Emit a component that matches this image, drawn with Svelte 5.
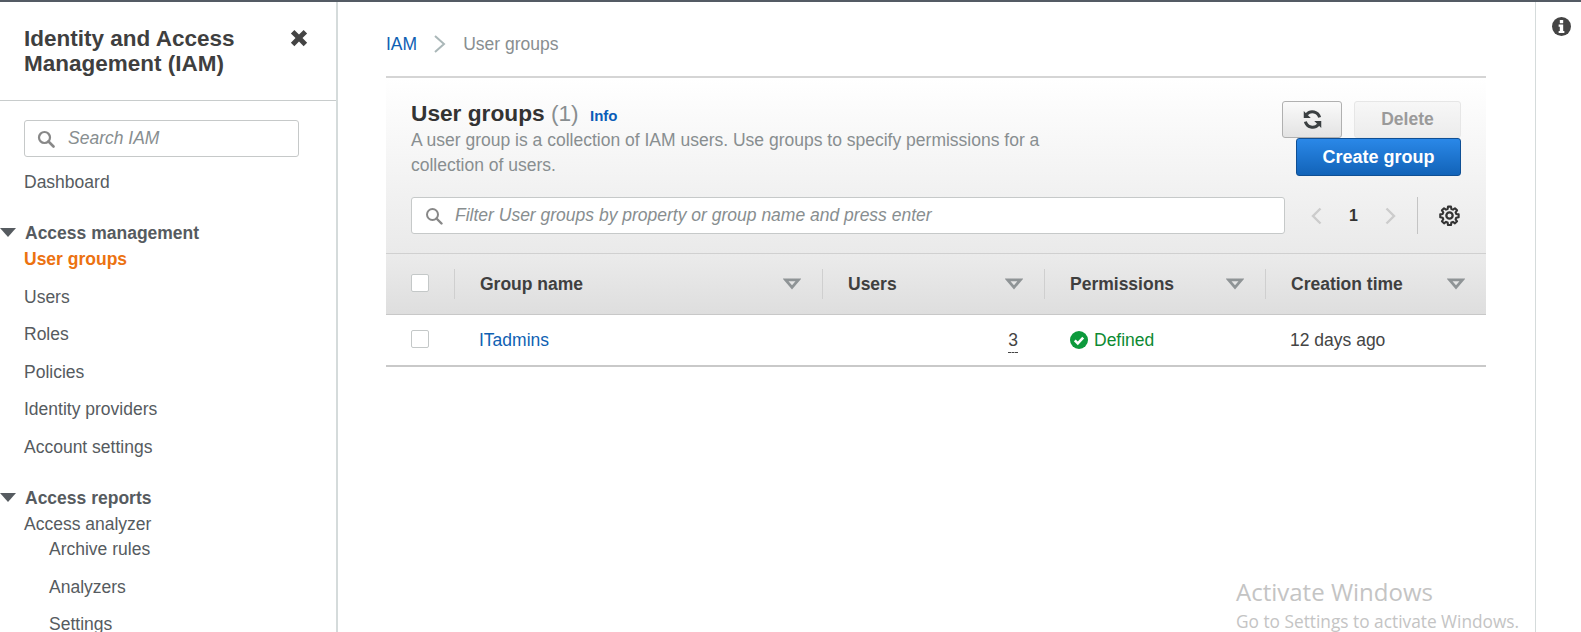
<script>
  const nav = ["Users", "Roles", "Policies", "Identity providers", "Account settings"];
  const subNav = ["Archive rules", "Analyzers", "Settings"];
  const columns = ["Group name", "Users", "Permissions", "Creation time"];
</script>

<div class="page">
  <aside class="sidebar">
    <header class="side-head">
      <h2>Identity and Access Management (IAM)</h2>
      <svg class="close" viewBox="0 0 16 16" width="20" height="20">
        <path d="M1.500 4.300 4.300 1.500 8 5.200l3.700-3.700 2.800 2.800L10.800 8l3.700 3.700-2.800 2.800L8 10.800l-3.700 3.700-2.800-2.800L5.200 8z" fill="#444" />
      </svg>
    </header>
    <div class="side-body">
      <div class="field side-search">
        <svg class="mag" viewBox="0 0 18 18" width="18" height="18">
          <circle cx="7.500" cy="7.500" r="5.500" fill="none" stroke="#888" stroke-width="2.200" />
          <path d="m11.500 11.500 5 5" stroke="#888" stroke-width="2.600" stroke-linecap="round" />
        </svg>
        <span class="hint">Search IAM</span>
      </div>
      <a class="item first">Dashboard</a>

      <div class="section"><i class="tri"></i>Access management</div>
      <a class="item current">User groups</a>
      {#each nav as label}
        <a class="item">{label}</a>
      {/each}

      <div class="section second"><i class="tri"></i>Access reports</div>
      <a class="item tight">Access analyzer</a>
      <div class="sub">
        {#each subNav as label}
          <a class="item">{label}</a>
        {/each}
      </div>
    </div>
  </aside>

  <main class="main">
    <nav class="crumbs">
      <a>IAM</a>
      <svg viewBox="0 0 14 20" width="14" height="20"><path d="m2 2 9 8-9 8" fill="none" stroke="#aab7b8" stroke-width="2" /></svg>
      <span>User groups</span>
    </nav>

    <section class="panel">
      <div class="panel-head">
        <div class="title-row">
          <div class="title-text">
            <h1>User groups <span class="count">(1)</span> <a class="info">Info</a></h1>
            <p>A user group is a collection of IAM users. Use groups to specify permissions for a collection of users.</p>
          </div>
          <div class="actions">
            <button class="btn refresh" aria-label="Refresh">
              <svg viewBox="0 0 18 18" width="21" height="21">
                <path d="M15.100 7.200A6.400 6.400 0 0 0 4 4.600" fill="none" stroke="#3a3f41" stroke-width="2.600" />
                <path d="M1.500 1.800v6h6z" fill="#3a3f41" />
                <path d="M2.900 10.800A6.400 6.400 0 0 0 14 13.400" fill="none" stroke="#3a3f41" stroke-width="2.600" />
                <path d="M16.500 16.200v-6h-6z" fill="#3a3f41" />
              </svg>
            </button>
            <button class="btn delete">Delete</button>
            <button class="btn primary">Create group</button>
          </div>
        </div>

        <div class="filter-row">
          <div class="field filter">
            <svg class="mag" viewBox="0 0 18 18" width="18" height="18">
              <circle cx="7.500" cy="7.500" r="5.500" fill="none" stroke="#888" stroke-width="2" />
              <path d="m11.500 11.500 5 5" stroke="#888" stroke-width="2.400" stroke-linecap="round" />
            </svg>
            <span class="hint">Filter User groups by property or group name and press enter</span>
          </div>
          <div class="pager">
            <svg viewBox="0 0 14 20" width="14" height="20"><path d="M11.500 2.500 4 10l7.500 7.500" fill="none" stroke="#ccc" stroke-width="2.400" /></svg>
            <b>1</b>
            <svg viewBox="0 0 14 20" width="14" height="20"><path d="m2.500 2.500 7.500 7.500-7.500 7.500" fill="none" stroke="#ccc" stroke-width="2.400" /></svg>
          </div>
          <div class="gear-wrap">
            <svg viewBox="0 0 20 20" width="21" height="21">
              <circle cx="10" cy="10" r="3" fill="none" stroke="#333" stroke-width="2.200" />
              <path d="M8.600 1.500h2.800l.4 2.300 1.500.6 1.900-1.300 2 2-1.400 1.900.6 1.500 2.300.4v2.800l-2.300.4-.6 1.500 1.400 1.900-2 2-1.900-1.400-1.500.6-.4 2.300H8.600l-.4-2.300-1.500-.6-1.900 1.400-2-2 1.300-1.900-.6-1.500-2.300-.4V8.900l2.300-.4.6-1.500-1.300-1.900 2-2 1.900 1.300 1.500-.6z" fill="none" stroke="#333" stroke-width="2" stroke-linejoin="round" />
            </svg>
          </div>
        </div>
      </div>

      <div class="grid thead">
        <div class="cell check"><span class="box"></span></div>
        {#each columns as col}
          <div class="cell col">
            <span>{col}</span>
            <svg viewBox="0 0 18 12" width="18" height="12"><path d="M2.500 1.800h13l-6.500 7.500z" fill="none" stroke="#8f9496" stroke-width="2.800" /></svg>
          </div>
        {/each}
      </div>

      <div class="grid row">
        <div class="cell-b check"><span class="box"></span></div>
        <div class="cell-b"><a class="link">ITadmins</a></div>
        <div class="cell-b users"><span class="num">3</span></div>
        <div class="cell-b ok">
          <svg viewBox="0 0 18 18" width="18" height="18">
            <circle cx="9" cy="9" r="9" fill="#0d9a3c" />
            <path d="m4.800 9.300 3 3 5.400-5.600" fill="none" stroke="#fff" stroke-width="2.600" />
          </svg>
          Defined
        </div>
        <div class="cell-b">12 days ago</div>
      </div>
    </section>
  </main>

  <aside class="rail">
    <svg viewBox="0 0 18 18" width="19" height="19">
      <circle cx="9" cy="9" r="9" fill="#444" />
      <rect x="7.400" y="2.900" width="3.200" height="3" rx=".5" fill="#fff" />
      <path d="M6.300 7.200h4.300v6h1.100v2H6.300v-2h1.100v-4H6.300z" fill="#fff" />
    </svg>
  </aside>

  <div class="watermark">
    <div class="wm-big">Activate Windows</div>
    <div class="wm-small">Go to Settings to activate Windows.</div>
  </div>
</div>

<style>
  :global(body) {
    margin: 0;
    background: #fff;
    font-family: "Liberation Sans", Arial, sans-serif;
  }

  .page {
    position: relative;
    display: flex;
    height: 630px;
    overflow: hidden;
    border-top: 2px solid #545b64;
    font-size: 17.500px;
    color: #444;
  }

  .sidebar {
    flex: none;
    width: 336px;
    border-right: 2px solid #d5dbdb;
    box-sizing: content-box;
    overflow: hidden;
  }

  .side-head {
    display: flex;
    justify-content: space-between;
    height: 99px;
    box-sizing: border-box;
    padding: 24px 27px 0 24px;
    border-bottom: 1px solid #c8cccc;
  }

  .side-head h2 {
    width: 250px;
    margin: 0;
    font-size: 22.500px;
    line-height: 25px;
    font-weight: 700;
    color: #3f3f3f;
  }

  .close {
    margin-top: 2px;
  }

  .side-body {
    padding: 19px 0 0 24px;
  }

  .field {
    display: flex;
    align-items: center;
    box-sizing: border-box;
    height: 37px;
    background: #fff;
    border: 1px solid #c6c9c9;
    border-radius: 3px;
  }

  .side-search {
    width: 275px;
    padding-left: 12px;
  }

  .hint {
    margin-left: 13px;
    font-style: italic;
    color: #888e90;
  }

  .item {
    display: block;
    height: 37.500px;
    line-height: 37.500px;
    color: #565b60;
    white-space: nowrap;
  }

  .item.first {
    margin-top: 7px;
  }

  .section {
    position: relative;
    margin-top: 18px;
    line-height: 26px;
    font-weight: 700;
    color: #565b60;
    padding-left: 1px;
  }

  .section.second {
    margin-top: 19px;
  }

  .tri {
    position: absolute;
    left: -24px;
    top: 8px;
    border-left: 8px solid transparent;
    border-right: 8px solid transparent;
    border-top: 9px solid #565b60;
  }

  .item.current {
    height: 26px;
    line-height: 26px;
    margin-bottom: 7px;
    font-weight: 700;
    color: #ec7211;
  }

  .item.tight {
    height: 26px;
    line-height: 26px;
  }

  .sub {
    margin-top: -6px;
    padding-left: 25px;
  }

  .main {
    flex: none;
    width: 1197px;
    box-sizing: border-box;
    padding: 0 49px 0 48px;
  }

  .crumbs {
    display: flex;
    align-items: center;
    gap: 16px;
    height: 74px;
    box-sizing: border-box;
    padding: 10px 0 0;
    color: #888e90;
  }

  .crumbs a {
    color: #0f5fb3;
  }

  .panel {
    border-top: 2px solid #d5d5d5;
    border-bottom: 2px solid #c9c9c9;
  }

  .panel-head {
    height: 176px;
    box-sizing: border-box;
    padding: 23px 25px 0;
    background: linear-gradient(#fff, #eaeaea);
    border-bottom: 1px solid #d0d0d0;
  }

  .title-row {
    display: flex;
    justify-content: space-between;
    height: 96px;
  }

  .title-text {
    width: 640px;
  }

  h1 {
    margin: 0;
    font-size: 22.700px;
    line-height: 25px;
    font-weight: 700;
    color: #333;
  }

  .count {
    font-weight: 400;
    color: #888e90;
  }

  .info {
    margin-left: 5px;
    font-size: 15px;
    color: #0a5cb8;
  }

  .title-text p {
    margin: 0;
    line-height: 24.500px;
    color: #888e90;
  }

  .actions {
    display: flex;
    flex-wrap: wrap;
    justify-content: flex-end;
    align-content: flex-start;
    column-gap: 12px;
    width: 179px;
  }

  .btn {
    box-sizing: border-box;
    height: 37px;
    border-radius: 3px;
    font: 700 17.500px "Liberation Sans", Arial, sans-serif;
    padding: 0;
  }

  .refresh {
    display: flex;
    align-items: center;
    justify-content: center;
    width: 60px;
    background: linear-gradient(#fafafa, #e3e3e3);
    border: 1px solid #b0b0b0;
  }

  .delete {
    width: 107px;
    background: linear-gradient(#f7f7f7, #ececec);
    border: 1px solid #e6e6e6;
    color: #9a9a9a;
  }

  .primary {
    width: 165px;
    height: 38px;
    font-size: 18px;
    background: linear-gradient(#2a88e8, #1263b8);
    border: 1px solid #0f4f94;
    color: #fff;
  }

  .filter-row {
    display: flex;
    align-items: center;
    height: 37px;
  }

  .filter {
    width: 874px;
    padding-left: 13px;
  }

  .filter .hint {
    margin-left: 12px;
  }

  .pager {
    display: flex;
    align-items: center;
    justify-content: space-between;
    width: 89px;
    margin-left: 24px;
    font-size: 16px;
  }

  .pager b {
    color: #333;
  }

  .gear-wrap {
    display: flex;
    align-items: center;
    height: 37px;
    margin-left: 19px;
    padding-left: 21px;
    border-left: 1px solid #c4c4c4;
  }

  .grid {
    display: grid;
    grid-template-columns: 68px 368px 222px 221px 221px;
  }

  .thead {
    height: 60px;
    align-items: center;
    background: linear-gradient(#ebebeb, #dedede);
    border-bottom: 1px solid #c8c8c8;
    box-sizing: content-box;
  }

  .cell {
    display: flex;
    align-items: center;
    height: 30px;
  }

  .col {
    justify-content: space-between;
    padding: 0 21px 0 25px;
    border-left: 1px solid #cfcfcf;
    font-weight: 700;
    color: #3f3f3f;
  }

  .cell.check .box {
    margin-top: -3px;
  }

  .check {
    padding-left: 25px;
  }

  .box {
    display: block;
    box-sizing: border-box;
    width: 18px;
    height: 18px;
    background: #fff;
    border: 1px solid #c4c8c8;
    border-radius: 2px;
  }

  .row {
    height: 50px;
    align-items: center;
  }

  .cell-b {
    display: flex;
    align-items: center;
    padding-left: 25px;
    color: #444;
  }

  .cell-b.check {
    padding-left: 25px;
  }

  .cell-b.check .box {
    margin-top: -2px;
  }

  .link {
    color: #0f5fb3;
  }

  .users {
    justify-content: flex-end;
    padding-right: 26px;
  }

  .num {
    margin-top: 3px;
    line-height: 19px;
    padding-bottom: 2px;
    border-bottom: 1px dashed #444;
  }

  .ok {
    gap: 6px;
    padding-left: 26px;
    color: #0d8a32;
  }

  .rail {
    flex: none;
    width: 46px;
    border-left: 1px solid #d5dbdb;
    padding: 15px 0 0 16px;
    box-sizing: border-box;
  }

  .watermark {
    position: absolute;
    left: 1236px;
    top: 574px;
    font-family: "Open Sans", sans-serif;
    color: #c4c4c4;
    white-space: nowrap;
  }

  .wm-big {
    font-size: 24px;
    line-height: 32px;
  }

  .wm-small {
    font-size: 17.300px;
    line-height: 28px;
  }
</style>
